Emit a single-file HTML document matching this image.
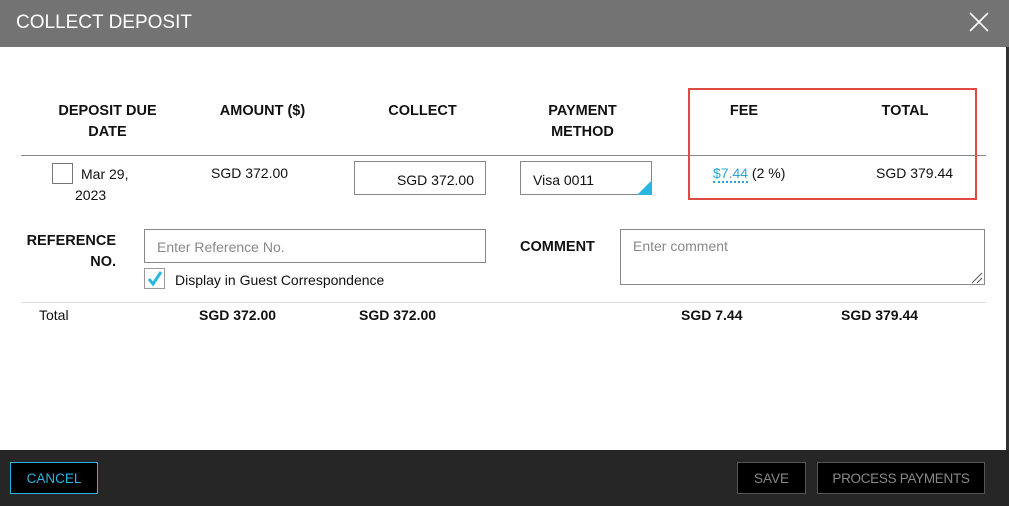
<!DOCTYPE html>
<html><head><style>
*{box-sizing:border-box;margin:0;padding:0}
body{width:1009px;height:506px;position:relative;background:#fff;font-family:"Liberation Sans",sans-serif;font-size:14px;color:#111;overflow:hidden}
.a{position:absolute}
.h{font-weight:bold;text-align:center;font-size:14.5px;line-height:21px}
</style></head><body>
<div class="a" style="left:0;top:0;width:1009px;height:47px;background:#737373"></div>
<div class="a" style="left:16px;top:12px;color:#fff;font-size:19px">COLLECT DEPOSIT</div>
<svg class="a" style="left:969px;top:12px" width="20" height="20"><path d="M1 1L19 19M19 1L1 19" stroke="#fff" stroke-width="1.6"/></svg>
<div class="a" style="left:1006px;top:47px;width:3px;height:403px;background:#333"></div>

<div class="a h" style="left:40px;top:101px;width:135px">DEPOSIT DUE<br>DATE</div>
<div class="a h" style="left:195px;top:101px;width:135px">AMOUNT ($)</div>
<div class="a h" style="left:355px;top:101px;width:135px">COLLECT</div>
<div class="a h" style="left:515px;top:101px;width:135px">PAYMENT<br>METHOD</div>
<div class="a h" style="left:700px;top:101px;width:88px">FEE</div>
<div class="a h" style="left:860px;top:101px;width:90px">TOTAL</div>
<div class="a" style="left:21px;top:155px;width:965px;height:1px;background:#888"></div>

<div class="a" style="left:52px;top:163px;width:21px;height:21px;border:1px solid #777"></div>
<div class="a" style="left:81px;top:163px;line-height:23px">Mar 29,</div>
<div class="a" style="left:75px;top:187px">2023</div>
<div class="a" style="left:211px;top:165px">SGD 372.00</div>
<div class="a" style="left:354px;top:161px;width:132px;height:34px;border:1px solid #888;text-align:right;padding:10px 11px 0 0">SGD 372.00</div>
<div class="a" style="left:520px;top:161px;width:132px;height:34px;border:1px solid #888;padding:10px 0 0 12px">Visa 0011</div>
<svg class="a" style="left:637px;top:180px" width="15" height="15"><path d="M15 0V15H0Z" fill="#29b6e0"/></svg>
<div class="a" style="left:713px;top:165px"><span style="color:#29a4d4;border-bottom:2px dotted #29a4d4">$7.44</span> (2 %)</div>
<div class="a" style="left:876px;top:165px">SGD 379.44</div>
<div class="a" style="left:688px;top:88px;width:289px;height:112px;border:2px solid #e04a43"></div>

<div class="a h" style="left:20px;top:231px;width:96px;text-align:right">REFERENCE<br>NO.</div>
<div class="a" style="left:144px;top:229px;width:342px;height:34px;border:1px solid #888;padding:9px 0 0 12px;color:#888">Enter Reference No.</div>
<div class="a" style="left:144px;top:268px;width:21px;height:21px;border:1px solid #999"></div>
<svg class="a" style="left:146px;top:270px" width="18" height="18"><path d="M3 9L7 14L15 2" stroke="#29b6e0" stroke-width="3" fill="none"/></svg>
<div class="a" style="left:175px;top:272px">Display in Guest Correspondence</div>
<div class="a h" style="left:520px;top:237px">COMMENT</div>
<div class="a" style="left:620px;top:229px;width:365px;height:56px;border:1px solid #888;padding:8px 0 0 12px;color:#888">Enter comment</div>
<svg class="a" style="left:971px;top:272px" width="12" height="12"><path d="M1 11L11 1M6 11L11 6" stroke="#555"/></svg>
<div class="a" style="left:21px;top:302px;width:965px;height:1px;background:#ddd"></div>

<div class="a" style="left:39px;top:307px">Total</div>
<div class="a" style="left:199px;top:307px;font-weight:bold">SGD 372.00</div>
<div class="a" style="left:359px;top:307px;font-weight:bold">SGD 372.00</div>
<div class="a" style="left:681px;top:307px;font-weight:bold">SGD 7.44</div>
<div class="a" style="left:841px;top:307px;font-weight:bold">SGD 379.44</div>

<div class="a" style="left:0;top:450px;width:1009px;height:56px;background:#262626"></div>
<div class="a" style="left:10px;top:462px;width:88px;height:32px;border:1px solid #29b6e0;background:#000;color:#29b6e0;text-align:center;padding-top:8px;font-size:13.5px">CANCEL</div>
<div class="a" style="left:737px;top:462px;width:69px;height:32px;border:1px solid #555;background:#000;color:#888;text-align:center;padding-top:8px;font-size:13.5px">SAVE</div>
<div class="a" style="left:817px;top:462px;width:168px;height:32px;border:1px solid #555;background:#000;color:#888;text-align:center;padding-top:8px;font-size:13.5px;letter-spacing:-0.3px">PROCESS PAYMENTS</div>
</body></html>
